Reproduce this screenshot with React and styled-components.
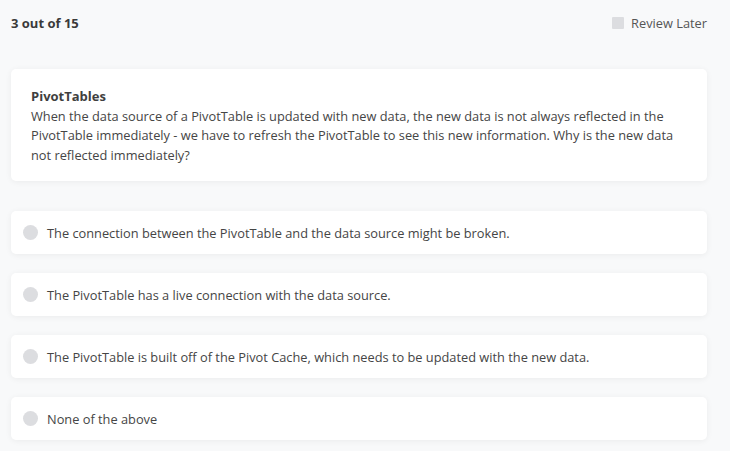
import React from 'react'
import styled, { createGlobalStyle } from 'styled-components'

const Global = createGlobalStyle`
body {
    margin: 0;
    background: #f8f9fa;
    font-family: "Open Sans", "Noto Sans", sans-serif;
    color: #444;
}
`

const Page = styled.div`
padding: 0 23px 0 11px;
height: 451px;
overflow: hidden;
`

const Header = styled.div`
display: flex;
justify-content: space-between;
align-items: center;
height: 46px;
`

const Counter = styled.h4`
margin: 0;
font-size: 13px;
font-weight: 700;
color: #3a3a3a;
`

const Review = styled.label`
display: flex;
align-items: center;
gap: 7px;
font-size: 12.8px;
color: #555;
`

const Box = styled.span`
width: 12px;
height: 12px;
background: #dcdde0;
border-radius: 1px;
`

const Card = styled.div`
background: #fff;
border-radius: 5px;
box-shadow: 0 1px 6px rgba(0, 0, 0, 0.06);
`

const Question = styled(Card)`
margin-top: 23px;
padding: 18px 20px 16px;
font-size: 12.8px;
line-height: 19.5px;
color: #454545;

h3{
    margin: 0;
    font-size: 13px;
    font-weight: 700;
    color: #3f3f3f;
}
p{
    margin: 0;
}
`

const Options = styled.div`
display: flex;
flex-direction: column;
gap: 19px;
margin-top: 30px;
`

const Option = styled(Card)`
display: flex;
align-items: center;
gap: 9px;
height: 43px;
padding: 0 12px;
font-size: 12.8px;
color: #454545;
`

const Radio = styled.span`
width: 15px;
height: 15px;
border-radius: 50%;
background: #dcdde0;
flex-shrink: 0;
`

const answers = [
    'The connection between the PivotTable and the data source might be broken.',
    'The PivotTable has a live connection with the data source.',
    'The PivotTable is built off of the Pivot Cache, which needs to be updated with the new data.',
    'None of the above',
]

const App = () => {
    return (
        <Page>
            <Global />
            <Header>
                <Counter>3 out of 15</Counter>
                <Review><Box /> Review Later</Review>
            </Header>
            <Question>
                <h3>PivotTables</h3>
                <p>When the data source of a PivotTable is updated with new data, the new data is not always reflected in the PivotTable immediately - we have to refresh the PivotTable to see this new information. Why is the new data not reflected immediately?</p>
            </Question>
            <Options>
                {answers.map(a => (
                    <Option key={a}>
                        <Radio />
                        {a}
                    </Option>
                ))}
            </Options>
        </Page>
    )
}

export default App
